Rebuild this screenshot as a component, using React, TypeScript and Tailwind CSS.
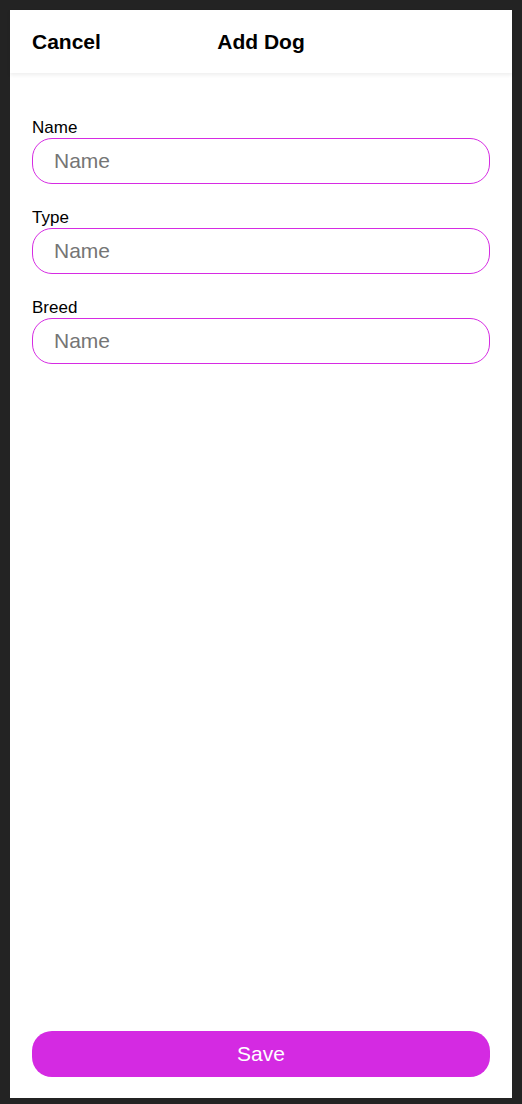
import React from 'react';

const fields = [
  { label: 'Name', placeholder: 'Name' },
  { label: 'Type', placeholder: 'Name' },
  { label: 'Breed', placeholder: 'Name' },
];

const Field: React.FC<{ label: string; placeholder: string }> = ({ label, placeholder }) => (
  <div className="flex flex-col">
    <label className="text-[17px] leading-[19px] text-black">{label}</label>
    <input
      placeholder={placeholder}
      className="mt-px h-[46px] w-full rounded-[20px] border border-[#d62be3] bg-white pl-[21px] text-[21px] text-black outline-none placeholder:text-[#757575]"
    />
  </div>
);

export default function App() {
  return (
    <div
      className="h-screen w-full bg-[#232323] px-[10px] pt-[10px] pb-[6px]"
      style={{ fontFamily: '"Liberation Sans", Arial, sans-serif' }}
    >
      <div className="flex h-full flex-col bg-white">
        <div className="relative z-10 flex h-[63px] shrink-0 items-center px-[22px] shadow-[0_2px_4px_rgba(0,0,0,0.07)]">
          <button className="text-[21px] font-bold text-black">Cancel</button>
          <div className="pointer-events-none absolute inset-0 flex items-center justify-center">
            <span className="text-[21px] font-bold text-black">Add Dog</span>
          </div>
        </div>

        <div className="flex flex-1 flex-col gap-[24px] px-[22px] pt-[45px]">
          {fields.map((f) => (
            <Field key={f.label} label={f.label} placeholder={f.placeholder} />
          ))}
        </div>

        <div className="px-[22px] pb-[21px]">
          <button className="h-[46px] w-full rounded-[20px] bg-[#d42ae2] text-[21px] text-white">
            Save
          </button>
        </div>
      </div>
    </div>
  );
}
